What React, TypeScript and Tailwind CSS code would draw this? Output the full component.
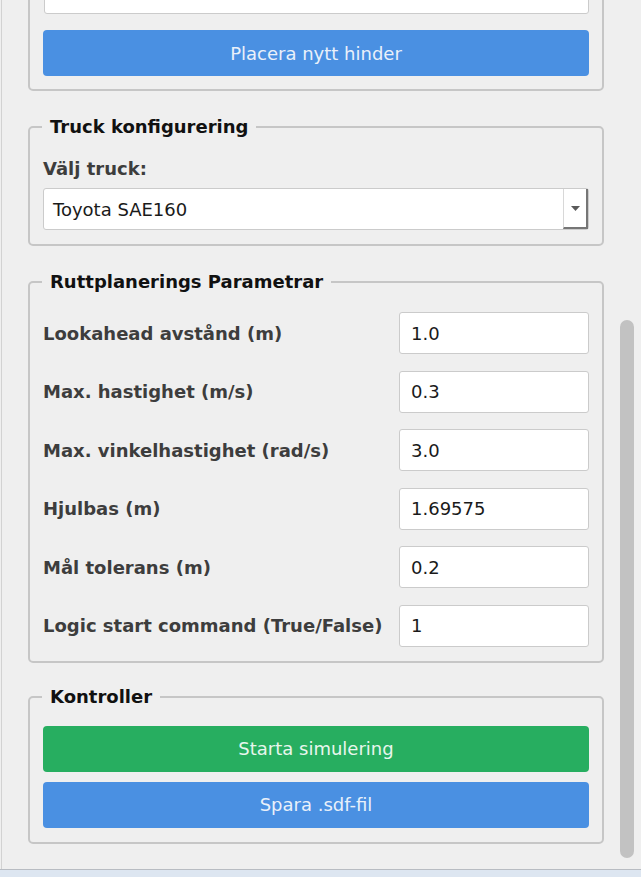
const params = [
  { label: "Lookahead avstånd (m)", value: "1.0" },
  { label: "Max. hastighet (m/s)", value: "0.3" },
  { label: "Max. vinkelhastighet (rad/s)", value: "3.0" },
  { label: "Hjulbas (m)", value: "1.69575" },
  { label: "Mål tolerans (m)", value: "0.2" },
  { label: "Logic start command (True/False)", value: "1" },
];

function Group({
  title,
  className = "",
  children,
}: {
  title: string;
  className?: string;
  children: React.ReactNode;
}) {
  return (
    <fieldset
      className={`border-2 border-[#c6c6c6] rounded-[5px] px-[13px] pb-[14px] ${className}`}
    >
      <legend className="px-2 -ml-px leading-[22px] font-bold text-[#111]">
        {title}
      </legend>
      {children}
    </fieldset>
  );
}

function TextField({ value, className = "" }: { value: string; className?: string }) {
  return (
    <div
      className={`h-[42px] bg-white border border-[#cbcbcb] rounded-[3px] flex items-center px-[11px] text-[#1a1a1a] ${className}`}
    >
      {value}
    </div>
  );
}

export default function App() {
  return (
    <div className="h-[877px] w-[641px] overflow-hidden bg-[#efefef] flex flex-col font-['DejaVu_Sans',sans-serif] text-[18px]">
      <div className="flex h-[869px]">
        <div className="w-px ml-px bg-[#d2d2d2]" />
        <div className="w-[604px] overflow-hidden">
          <div className="ml-[26px] w-[576px] flex flex-col">
            {/* hinder group, scrolled past its top */}
            <div className="-mt-[40px] border-2 border-[#c6c6c6] rounded-[5px] pt-[10px] pb-[13px] px-[13px] flex flex-col gap-4">
              <TextField value="" className="ml-px" />
              <button className="h-[46px] rounded-[4px] bg-[#4a90e2] text-[#e9f0fa]">
                Placera nytt hinder
              </button>
            </div>

            <Group title="Truck konfigurering" className="mt-[25px]">
              <div className="pt-[20px] leading-[22px] font-bold text-[#3d3d3d]">
                Välj truck:
              </div>
              <div className="mt-[8px] h-[42px] bg-white border border-[#cbcbcb] rounded-[3px] flex">
                <div className="flex-1 flex items-center pl-[9px] text-[#1a1a1a]">
                  Toyota SAE160
                </div>
                <div className="w-[25px] border-l border-[#d8d8d8] border-r-2 border-b-2 border-r-[#767676] border-b-[#767676] flex items-center justify-center">
                  <svg width="9" height="5" viewBox="0 0 9 5">
                    <path d="M0 0h9L4.5 5z" fill="#5a5a5a" />
                  </svg>
                </div>
              </div>
            </Group>

            <Group title="Ruttplanerings Parametrar" className="mt-[25px]">
              <div className="pt-[19px] flex flex-col gap-[16.5px]">
                {params.map((p) => (
                  <div key={p.label} className="flex items-center">
                    <div className="flex-1 font-bold text-[#3d3d3d]">{p.label}</div>
                    <TextField value={p.value} className="w-[190px]" />
                  </div>
                ))}
              </div>
            </Group>

            <Group title="Kontroller" className="mt-[23px]">
              <div className="pt-[18px] flex flex-col gap-[10px]">
                <button className="h-[46px] rounded-[4px] bg-[#27ae60] text-[#e8f6ed]">
                  Starta simulering
                </button>
                <button className="h-[46px] rounded-[4px] bg-[#4a90e2] text-[#e9f0fa]">
                  Spara .sdf-fil
                </button>
              </div>
            </Group>
          </div>
        </div>
        {/* scrollbar */}
        <div className="flex-1 flex justify-center pt-[320px] pb-[11px] pl-[7px]">
          <div className="w-[14px] rounded-full bg-[#c2c2c2]" />
        </div>
      </div>
      <div className="h-px bg-[#b8bcc2]" />
      <div className="flex-1 bg-[#dde6f1]" />
    </div>
  );
}
